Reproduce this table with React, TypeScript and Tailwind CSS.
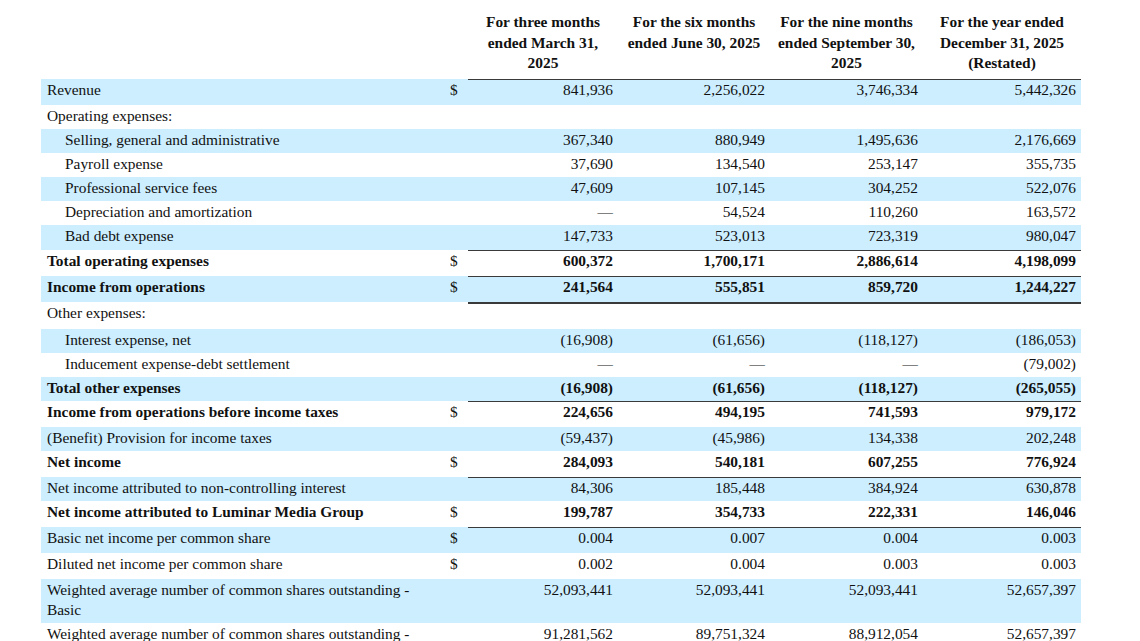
import React from 'react';

type Row = {
    label: React.ReactNode;
    vals: string[];
    h: string;
    indent?: boolean;
    bold?: boolean;
    blue?: boolean;
    dollar?: boolean;
    line?: string; // border over the number columns
};

const LINE1 = 'border-t border-[#3a3a3a]';
const LINE2 = 'border-t-2 border-[#3a3a3a]';

const rows: Row[] = [
    { label: 'Revenue', vals: ['841,936', '2,256,022', '3,746,334', '5,442,326'], h: 'h-[26px]', blue: true, dollar: true, line: LINE1 },
    { label: 'Operating expenses:', vals: ['', '', '', ''], h: 'h-[24px]' },
    { label: 'Selling, general and administrative', vals: ['367,340', '880,949', '1,495,636', '2,176,669'], h: 'h-[24px]', indent: true, blue: true },
    { label: 'Payroll expense', vals: ['37,690', '134,540', '253,147', '355,735'], h: 'h-[24px]', indent: true },
    { label: 'Professional service fees', vals: ['47,609', '107,145', '304,252', '522,076'], h: 'h-[24px]', indent: true, blue: true },
    { label: 'Depreciation and amortization', vals: ['—', '54,524', '110,260', '163,572'], h: 'h-[24px]', indent: true },
    { label: 'Bad debt expense', vals: ['147,733', '523,013', '723,319', '980,047'], h: 'h-[25px]', indent: true, blue: true },
    { label: 'Total operating expenses', vals: ['600,372', '1,700,171', '2,886,614', '4,198,099'], h: 'h-[26px]', bold: true, dollar: true, line: LINE1 },
    { label: 'Income from operations', vals: ['241,564', '555,851', '859,720', '1,244,227'], h: 'h-[26px]', bold: true, blue: true, dollar: true, line: LINE1 },
    { label: 'Other expenses:', vals: ['', '', '', ''], h: 'h-[27px]', line: LINE2 },
    { label: 'Interest expense, net', vals: ['(16,908)', '(61,656)', '(118,127)', '(186,053)'], h: 'h-[24px]', indent: true, blue: true },
    { label: 'Inducement expense-debt settlement', vals: ['—', '—', '—', '(79,002)'], h: 'h-[24px]', indent: true },
    { label: 'Total other expenses', vals: ['(16,908)', '(61,656)', '(118,127)', '(265,055)'], h: 'h-[24px]', bold: true, blue: true },
    { label: 'Income from operations before income taxes', vals: ['224,656', '494,195', '741,593', '979,172'], h: 'h-[26px]', bold: true, dollar: true, line: LINE1 },
    { label: '(Benefit) Provision for income taxes', vals: ['(59,437)', '(45,986)', '134,338', '202,248'], h: 'h-[24px]', blue: true },
    { label: 'Net income', vals: ['284,093', '540,181', '607,255', '776,924'], h: 'h-[26px]', bold: true, dollar: true },
    { label: 'Net income attributed to non-controlling interest', vals: ['84,306', '185,448', '384,924', '630,878'], h: 'h-[24px]', blue: true, line: LINE1 },
    { label: 'Net income attributed to Luminar Media Group', vals: ['199,787', '354,733', '222,331', '146,046'], h: 'h-[26px]', bold: true, dollar: true },
    { label: 'Basic net income per common share', vals: ['0.004', '0.007', '0.004', '0.003'], h: 'h-[26px]', blue: true, dollar: true, line: LINE1 },
    { label: 'Diluted net income per common share', vals: ['0.002', '0.004', '0.003', '0.003'], h: 'h-[26px]', dollar: true },
    {
        label: (<>Weighted average number of common shares outstanding -<br />Basic</>),
        vals: ['52,093,441', '52,093,441', '52,093,441', '52,657,397'], h: 'h-[44px]', blue: true,
    },
    {
        label: (<>Weighted average number of common shares outstanding -<br />Diluted</>),
        vals: ['91,281,562', '89,751,324', '88,912,054', '52,657,397'], h: 'h-[44px]',
    },
];

const headers: React.ReactNode[] = [
    <>For three months<br />ended March 31,<br />2025</>,
    <>For the six months<br />ended June 30, 2025</>,
    <>For the nine months<br />ended September 30,<br />2025</>,
    <>For the year ended<br />December 31, 2025<br />(Restated)</>,
];

const App: React.FC = () => {
    return (
        <div className="min-h-screen bg-white pl-[41px] text-[15.4px] leading-[20px] text-[#111]" style={{ fontFamily: '"Liberation Serif", "Times New Roman", serif' }}>
            <table className="w-[1040px] table-fixed border-separate border-spacing-0">
                <colgroup>
                    <col className="w-[391px]" />
                    <col className="w-[36px]" />
                    <col className="w-[150px]" />
                    <col className="w-[152px]" />
                    <col className="w-[153px]" />
                    <col className="w-[158px]" />
                </colgroup>
                <thead>
                    <tr className="h-[79px]">
                        <th className="p-0"></th>
                        <th className="p-0"></th>
                        {headers.map((h, i) => (
                            <th key={i} className="p-0 pt-[12px] align-top text-center font-bold leading-[20.5px]">
                                {h}
                            </th>
                        ))}
                    </tr>
                </thead>
                <tbody>
                    {rows.map((r, i) => {
                        const bg = r.blue ? 'bg-[#cceeff]' : 'bg-white';
                        const weight = r.bold ? 'font-bold' : 'font-normal';
                        return (
                            <tr key={i} className={r.h}>
                                <td className={`${bg} ${weight} p-0 pt-[1px] align-top ${r.indent ? 'pl-[24px]' : 'pl-[6px]'}`}>
                                    {r.label}
                                </td>
                                <td className={`${bg} p-0 pt-[1px] pl-[18px] align-top`}>
                                    {r.dollar ? '$' : ''}
                                </td>
                                {r.vals.map((v, j) => (
                                    <td
                                        key={j}
                                        className={`${bg} ${weight} p-0 pr-[5px] text-right align-top whitespace-nowrap ${r.line ? r.line + ' pt-0' : 'pt-[1px]'}`}
                                    >
                                        {v}
                                    </td>
                                ))}
                            </tr>
                        );
                    })}
                </tbody>
            </table>
        </div>
    );
};

export default App;
